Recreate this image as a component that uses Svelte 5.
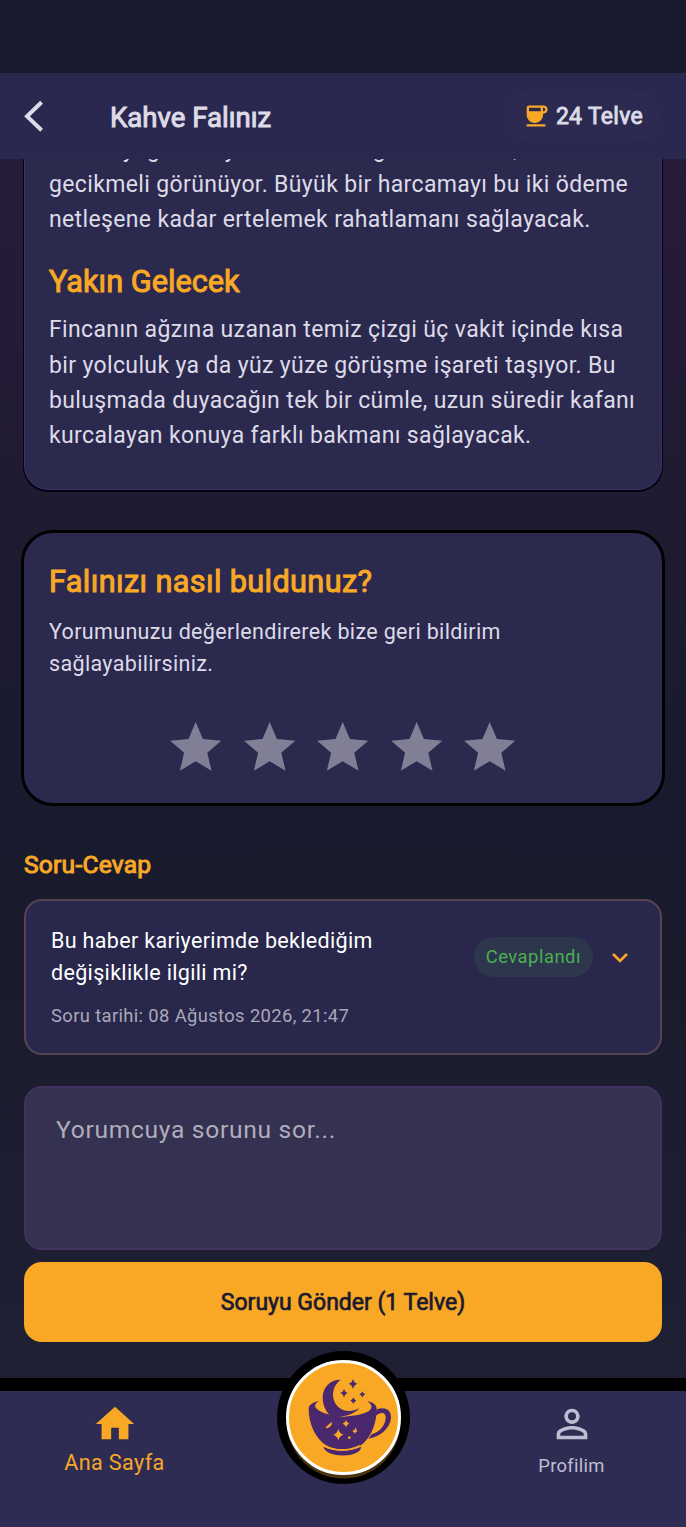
<script>
  const stars = [1, 2, 3, 4, 5];
  let rating = 0;
  let question = "";
  let open = false;

  const questions = [
    {
      text: "Bu haber kariyerimde beklediğim değişiklikle ilgili mi?",
      date: "08 Ağustos 2026, 21:47",
      status: "Cevaplandı"
    }
  ];
</script>

<div class="app">
  <div class="status-bar"></div>

  <header>
    <button class="back" aria-label="Geri">
      <svg viewBox="0 0 20 32" width="20" height="32">
        <path d="M17.6 2.2 3 16.2l14.6 14" fill="none" stroke="currentColor" stroke-width="4" />
      </svg>
    </button>
    <h1>Kahve Falınız</h1>
    <div class="balance">
      <svg viewBox="0 0 24 24" width="28" height="28">
        <path d="M18.5 3H6c-1.1 0-2 .9-2 2v5.71c0 3.83 2.95 7.18 6.78 7.29 3.96.12 7.22-3.06 7.22-7v-1h.5c1.93 0 3.5-1.57 3.5-3.5S20.43 3 18.5 3zM16 5v3H6V5h10zm2.5 3H18V5h.5c.83 0 1.5.67 1.5 1.5S19.33 8 18.5 8zM4 19h16v2H4v-2z" fill="currentColor" />
      </svg>
      <span>24 Telve</span>
    </div>
  </header>

  <main>
    <section class="reading">
      <p>
        Onun ayağından yeni bir ara dağıtım masrafı, ikisi<br />
        gecikmeli görünüyor. Büyük bir harcamayı bu iki ödeme<br />
        netleşene kadar ertelemek rahatlamanı sağlayacak.
      </p>
      <h2>Yakın Gelecek</h2>
      <p>
        Fincanın ağzına uzanan temiz çizgi üç vakit içinde kısa<br />
        bir yolculuk ya da yüz yüze görüşme işareti taşıyor. Bu<br />
        buluşmada duyacağın tek bir cümle, uzun süredir kafanı<br />
        kurcalayan konuya farklı bakmanı sağlayacak.
      </p>
    </section>

    <section class="rating">
      <h2>Falınızı nasıl buldunuz?</h2>
      <p>Yorumunuzu değerlendirerek bize geri bildirim<br />sağlayabilirsiniz.</p>
      <div class="stars">
        {#each stars as star}
          <button class:active={star <= rating} aria-label={`${star} yıldız`} on:click={() => (rating = star)}>
            <svg viewBox="0 0 24 24" width="61.4" height="61.4">
              <path d="M12 17.27 18.18 21l-1.64-7.03L22 9.24l-7.19-.61L12 2 9.19 8.63 2 9.24l5.46 4.73L5.82 21z" fill="currentColor" />
            </svg>
          </button>
        {/each}
      </div>
    </section>

    <h3>Soru-Cevap</h3>

    {#each questions as q}
      <article>
        <div class="question">
          <p>{q.text}</p>
          <time>Soru tarihi: {q.date}</time>
        </div>
        <span class="badge">{q.status}</span>
        <button class="toggle" aria-label="Cevabı göster" on:click={() => (open = !open)}>
          <svg viewBox="0 0 18 12" width="18" height="12">
            <path d="M2 2l7 7 7-7" fill="none" stroke="currentColor" stroke-width="2.6" />
          </svg>
        </button>
      </article>
    {/each}

    <textarea placeholder="Yorumcuya sorunu sor..." bind:value={question}></textarea>
    <button class="send">Soruyu Gönder (1 Telve)</button>
  </main>

  <nav>
    <a class="home" href="#home">
      <svg viewBox="0 0 24 24" width="46" height="46">
        <path d="M10 20v-6h4v6h5v-8h3L12 3 2 12h3v8z" fill="currentColor" />
      </svg>
      <span>Ana Sayfa</span>
    </a>
    <a class="profile" href="#profile">
      <svg viewBox="0 0 24 24" width="46" height="46">
        <path d="M12 5.9a2.1 2.1 0 1 1 0 4.2 2.1 2.1 0 0 1 0-4.2m0 9c2.97 0 6.1 1.46 6.1 2.1v1.1H5.9V17c0-.64 3.13-2.1 6.1-2.1M12 4C9.79 4 8 5.79 8 8s1.79 4 4 4 4-1.79 4-4-1.79-4-4-4zm0 9c-2.67 0-8 1.34-8 4v3h16v-3c0-2.66-5.33-4-8-4z" fill="currentColor" />
      </svg>
      <span>Profilim</span>
    </a>
    <button class="fortune" aria-label="Fal baktır">
      <svg viewBox="87 69 327 327" width="115" height="115">
        <g fill="#4b286d">
          <!-- moon -->
          <path d="M242 119c-32-2-54 24-54 54 0 23 10 44 28 58 35 0 64-6 83-27-19 10-43 13-59 1-27-20-29-63 2-86z" />
          <!-- cup -->
          <path d="M177 183c-16 3-31 11-31 22 0 63 35 108 68 118 20 7 54 7 74 0 34-11 62-58 62-118-1-12-14-19-29-22 12 8 18 18 9 27-12 12-43 17-79 20-36-2-68-10-83-26-6-8-1-15 9-21z" />
          <path d="M190 320c35 16 76 16 113 0 1 35-107 35-113 0z" />
        </g>
        <path d="M192 317c34 17 75 17 108 0" fill="none" stroke="#f9a826" stroke-width="5" />
        <path d="M350 208c28-9 44 3 43 26-3 32-34 58-68 62l11-14c21-6 38-23 41-46 2-19-13-22-31-8z" fill="#4b286d" />
        <g fill="#4b286d">
          <path d="M279 116q3 13 14 15-11 3-14 16-3-13-14-16 11-2 14-15z" />
          <path d="M252 146q3 11 12 13-9 2-12 14-3-12-12-14 9-2 12-13z" />
          <path d="M307 154q2 8 9 9-7 2-9 10-2-8-9-10 7-1 9-9z" />
          <path d="M280 172q2 8 9 10-7 2-9 10-2-8-9-10 7-2 9-10z" />
        </g>
        <g fill="#f9a826">
          <path d="M235 266q3 15 16 18-13 3-16 17-3-14-16-17 13-3 16-18z" />
          <path d="M258 240q2 9 10 11-8 2-10 11-2-9-10-11 8-2 10-11z" />
          <path d="M217 246q-1 9-7 14-5 5-14 5 4-8 9-11 5-5 12-8z" />
          <path d="M288 262q0 8 4 12-5 2-8 7-1-5-7-8 8-3 11-11z" />
          <circle cx="268" cy="293" r="4" />
        </g>
      </svg>
    </button>
  </nav>
</div>

<style>
  :global(body) {
    margin: 0;
    background: #1a1a2e;
  }

  .app {
    display: flex;
    flex-direction: column;
    height: 1527px;
    overflow: hidden;
    font-family: Roboto, sans-serif;
    color: #dddbe7;
    background: linear-gradient(#261b39 159px, #241b37 330px, #1f1b30 500px, #1a1a2e 730px, #1b1b2e 1000px, #202035 1380px);
  }

  h1, h2, h3, p {
    margin: 0;
  }

  h1, h2, h3 {
    font-weight: 400;
    -webkit-text-stroke: 1px currentColor;
  }

  button {
    padding: 0;
    border: 0;
    background: none;
    font-family: inherit;
    color: inherit;
  }

  svg {
    display: block;
    flex: none;
  }

  .status-bar {
    flex: none;
    height: 73px;
    background: #1a1a2e;
  }

  header {
    display: flex;
    flex: none;
    align-items: center;
    box-sizing: border-box;
    height: 86px;
    padding: 0 26px 0 24px;
    background: #2a284e;
  }

  h1 {
    flex: 1;
    margin: 3px 0 0 66px;
    font-size: 27.6px;
    line-height: 34px;
  }

  .balance {
    display: flex;
    align-items: center;
    box-sizing: border-box;
    height: 52px;
    gap: 6px;
    padding: 0 17px 0 18px;
    border-radius: 26px;
    background: #2c2a51;
    font-size: 23px;
    letter-spacing: 0.3px;
    -webkit-text-stroke: 0.9px currentColor;
  }

  .balance svg {
    color: #f9a826;
  }

  main {
    display: flex;
    flex: 1;
    flex-direction: column;
    min-height: 0;
    overflow: hidden;
    padding: 0 24px;
  }

  h2, h3 {
    color: #f9a826;
  }

  .reading {
    flex: none;
    margin-top: -52px;
    padding: 24px 24px 36px;
    border: 1px solid #3d3165;
    border-radius: 24px;
    background: #2c294f;
    box-shadow: 0 1px 0 1px #040214;
    font-size: 23px;
    line-height: 35.2px;
    letter-spacing: 0.36px;
    white-space: nowrap;
  }

  .reading h2 {
    margin: 26px 0 12.8px;
    font-size: 30.7px;
    line-height: 36px;
    letter-spacing: 0;
  }

  .rating {
    flex: none;
    box-sizing: border-box;
    height: 276px;
    margin: 39.7px -3px 0;
    padding: 30px 25px 0;
    border: 3px solid #000;
    border-radius: 32px;
    background: #2c294f;
  }

  .rating h2 {
    font-size: 30.7px;
    line-height: 38px;
    letter-spacing: 0.36px;
  }

  .rating p {
    margin-top: 15px;
    font-size: 21.5px;
    line-height: 32px;
    letter-spacing: 0.34px;
  }

  .stars {
    display: flex;
    justify-content: center;
    gap: 12.1px;
    margin-top: 37px;
    color: #817f96;
  }

  .stars .active {
    color: #f9a826;
  }

  h3 {
    margin: 43px 0 18px;
    font-size: 24.6px;
    line-height: 32px;
    letter-spacing: 0.22px;
  }

  article {
    display: flex;
    flex: none;
    align-items: flex-start;
    box-sizing: border-box;
    height: 156px;
    padding: 24px 31px 0 25px;
    border: 2px solid #564453;
    border-radius: 18px;
    background: #29274c;
  }

  .question {
    flex: 1;
  }

  .question p {
    width: 345px;
    font-size: 21.5px;
    line-height: 32px;
    letter-spacing: 0.33px;
    color: #fff;
  }

  time {
    display: block;
    margin-top: 15px;
    font-size: 18.4px;
    line-height: 24px;
    letter-spacing: 0.36px;
    color: #a9a8b7;
  }

  .badge {
    margin: 12px 18px 0 0;
    padding: 0 12px;
    border-radius: 20px;
    background: #2d364d;
    font-size: 18.4px;
    line-height: 40px;
    letter-spacing: 0.5px;
    color: #4caf50;
  }

  .toggle {
    margin-top: 27px;
    color: #f9a826;
  }

  textarea {
    flex: none;
    box-sizing: border-box;
    height: 164px;
    margin: 31px 0 12px;
    padding: 27px 30px;
    border: 2px solid #41325f;
    border-radius: 18px;
    background: #343151;
    font: 24.6px/30px Roboto, sans-serif;
    letter-spacing: 0.7px;
    color: #dddbe7;
    resize: none;
    outline: none;
  }

  textarea::placeholder {
    color: #afadba;
  }

  .send {
    flex: none;
    height: 80px;
    padding-top: 1px;
    border-radius: 18px;
    background: #f9a826;
    font-size: 23px;
    color: #1a1a2e;
    -webkit-text-stroke: 0.7px currentColor;
  }

  nav {
    position: relative;
    display: flex;
    flex: none;
    justify-content: space-between;
    box-sizing: border-box;
    height: 149px;
    border-top: 13px solid #000;
    background: #2f2c54;
  }

  nav a {
    display: flex;
    flex-direction: column;
    align-items: center;
    width: 229px;
    padding-top: 10px;
    text-decoration: none;
  }

  .home {
    font-size: 21.5px;
    line-height: 32px;
    letter-spacing: 0.4px;
    color: #f9a826;
  }

  .profile {
    font-size: 18.4px;
    line-height: 37px;
    letter-spacing: 0.3px;
    color: #bfbdd3;
  }

  /* raised button sits over the top edge of the bar */
  .fortune {
    position: absolute;
    left: calc(50% - 66.5px);
    top: -40px;
    width: 133px;
    height: 133px;
    border-radius: 50%;
    background: #000;
  }

  .fortune svg {
    box-sizing: border-box;
    margin: -1px auto 0;
    border: 3px solid #fff;
    border-radius: 50%;
    background: #f9a826;
    box-shadow: 0 4px 0 -0.5px #4a3412;
  }
</style>
